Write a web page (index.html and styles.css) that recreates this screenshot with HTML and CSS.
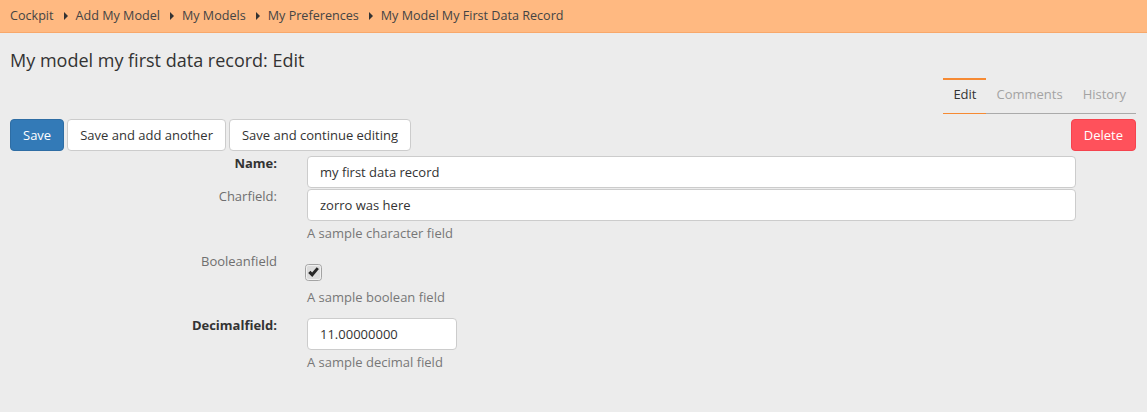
FILE: index.html
```html
<!DOCTYPE html>
<html lang="en">
<head>
<meta charset="utf-8">
<title>My model my first data record: Edit</title>
<link rel="stylesheet" href="styles.css">
</head>
<body>
<header class="topbar">
  <nav class="crumbs">
    <span class="crumb">Cockpit</span><span class="sep"></span>
    <span class="crumb">Add My Model</span><span class="sep"></span>
    <span class="crumb">My Models</span><span class="sep"></span>
    <span class="crumb">My Preferences</span><span class="sep"></span>
    <span class="crumb">My Model My First Data Record</span>
  </nav>
</header>
<main class="page">
  <h1 class="title">My model my first data record: Edit</h1>
  <div class="tabs-row">
    <ul class="tabs">
      <li class="tab active">Edit</li>
      <li class="tab">Comments</li>
      <li class="tab">History</li>
    </ul>
  </div>
  <div class="actions">
    <div class="btn-group">
      <button class="btn btn-primary">Save</button>
      <button class="btn">Save and add another</button>
      <button class="btn">Save and continue editing</button>
    </div>
    <button class="btn btn-danger">Delete</button>
  </div>
  <form class="form">
    <div class="row">
      <label class="label required">Name:</label>
      <div class="field"><input class="input" type="text" value="my first data record"></div>
    </div>
    <div class="row">
      <label class="label">Charfield:</label>
      <div class="field">
        <input class="input" type="text" value="zorro was here">
        <p class="help">A sample character field</p>
      </div>
    </div>
    <div class="row">
      <label class="label">Booleanfield</label>
      <div class="field">
        <span class="checkbox">
          <svg width="17" height="17" viewBox="0 0 17 17" aria-hidden="true">
            <rect x="0.5" y="0.5" width="16" height="16" rx="3" ry="3" fill="#dcdcdc" stroke="#a3a3a3"/>
            <rect x="1.5" y="1.5" width="14" height="14" rx="2" ry="2" fill="none" stroke="#f0f0f0" stroke-width="1"/>
            <path d="M3.2 8.9 L5.5 6.8 L7.1 8.6 L11.7 3.2 L13.9 5.0 L7.3 12.9 Z" fill="#262626"/>
          </svg>
        </span>
        <p class="help help-check">A sample boolean field</p>
      </div>
    </div>
    <div class="row">
      <label class="label required">Decimalfield:</label>
      <div class="field">
        <input class="input input-small" type="text" value="11.00000000">
        <p class="help">A sample decimal field</p>
      </div>
    </div>
  </form>
</main>
</body>
</html>
```
FILE: styles.css
```css
* { box-sizing: border-box; }

html, body {
  margin: 0;
  padding: 0;
  background: #ececec;
}

body {
  font-family: "Open Sans", "Liberation Sans", sans-serif;
  font-size: 13px;
  color: #333;
}

.topbar {
  height: 33px;
  background: #ffb981;
  border-bottom: 1px solid #f8a86a;
}

.crumbs {
  display: flex;
  align-items: center;
  height: 32px;
  padding: 0 10px;
  color: #444;
  font-size: 12.6px;
  line-height: 18px;
}

.sep {
  display: inline-block;
  width: 0;
  height: 0;
  border-top: 4px solid transparent;
  border-bottom: 4px solid transparent;
  border-left: 4px solid #333;
  margin: 0 8px 0 10px;
}

.page {
  padding: 0 11px 0 10px;
}

.title {
  margin: 14px 0 0;
  font-size: 18px;
  font-weight: 400;
  line-height: 26px;
  color: #333;
}

.tabs-row {
  display: flex;
  justify-content: flex-end;
  margin-top: 5px;
}

.tabs {
  display: flex;
  list-style: none;
  margin: 0;
  padding: 0;
  border-bottom: 1px solid #aaa;
}

.tab {
  padding: 5px 10px 10px;
  line-height: 18px;
  border-top: 2px solid transparent;
  margin-bottom: -1px;
  border-bottom: 1px solid transparent;
  color: #a3a3a3;
}

.tab.active {
  color: #333;
  border-top-color: #f68a33;
  border-bottom-color: #f68a33;
}

.actions {
  display: flex;
  justify-content: space-between;
  margin-top: 5px;
}

.btn-group {
  display: flex;
  gap: 3px;
}

.btn {
  height: 32px;
  padding: 0 12px;
  font-family: inherit;
  font-size: 13px;
  color: #333;
  background: #fff;
  border: 1px solid #ccc;
  border-radius: 4px;
}

.btn-primary {
  background: #337ab7;
  border-color: #2e6da4;
  color: #fff;
}

.btn-danger {
  background: #ff515b;
  border-color: #f5434e;
  color: #fff;
}

.form {
  margin-top: 5px;
  margin-left: -10px;
}

.row {
  display: grid;
  grid-template-columns: 277px 769px;
  column-gap: 30px;
  margin-bottom: 1px;
}

.label {
  text-align: right;
  line-height: 18px;
  margin-top: -2px;
  color: #6f6f6f;
}

.label.required {
  font-weight: 700;
  color: #333;
}

.field {
  display: flex;
  flex-direction: column;
  align-items: flex-start;
}

.input {
  width: 100%;
  height: 32px;
  padding: 0 12px;
  font-family: inherit;
  font-size: 13px;
  color: #333;
  background: #fff;
  border: 1px solid #ccc;
  border-radius: 4px;
}

.input-small {
  width: 150px;
}

.help {
  margin: 3px 0 11px;
  line-height: 18px;
  color: #777;
}

.checkbox {
  display: block;
  width: 17px;
  height: 17px;
  margin: 10px 0 0 -2px;
}

.checkbox svg {
  display: block;
}

.help-check {
  margin-top: 7px;
}
```
